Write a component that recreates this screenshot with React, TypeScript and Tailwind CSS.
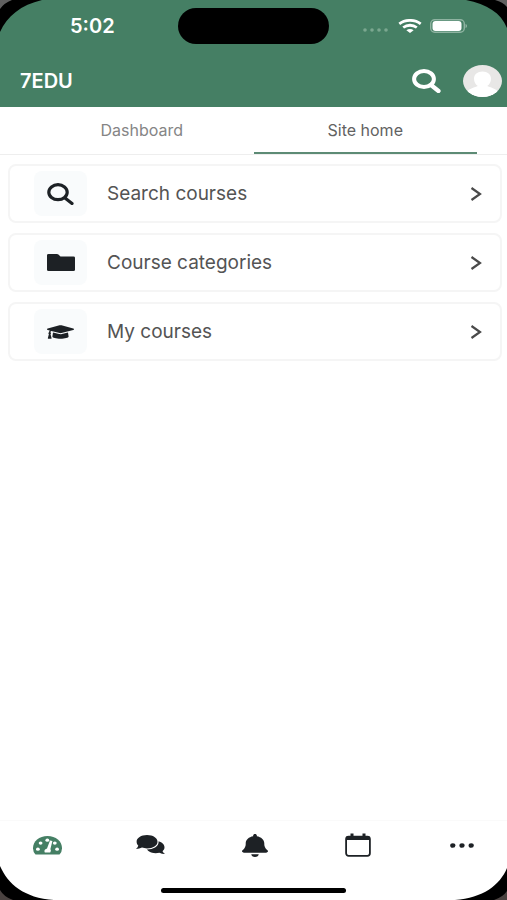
import type { ReactNode } from 'react';
import { FaBell } from 'react-icons/fa6';
import { FaGraduationCap } from 'react-icons/fa';

function StatusBar() {
  return (
    <div className="grid h-[54px] grid-cols-3 items-start pt-2">
      <time className="pt-1 pl-[70px] text-[20px] leading-7 font-semibold">5:02</time>
      <div className="h-9 w-[151px] justify-self-center rounded-full bg-black" />
      <div className="flex h-9 items-center justify-end gap-2 pr-[39px]">
        <svg className="mt-2 h-1 w-7 text-[#7ba790]" viewBox="0 0 28 4" fill="currentColor" aria-hidden="true">
          <circle cx="3" cy="2" r="1.800" />
          <circle cx="10" cy="2" r="1.800" />
          <circle cx="17" cy="2" r="1.800" />
          <circle cx="24" cy="2" r="1.800" />
        </svg>
        <svg className="h-[14px] w-6" viewBox="0 0 24 14" fill="none" stroke="currentColor" strokeWidth="2.8" aria-hidden="true">
          <path d="M1.3 4.9C7.4.2 16.6.2 22.7 4.9" />
          <path d="M5.2 8.500c4-3 9.600-3 13.600 0" />
          <path d="M8.4 11.200c2.100-1.600 5.100-1.600 7.200 0L12 14z" fill="currentColor" stroke="none" />
        </svg>
        <svg className="h-[14px] w-[38px]" viewBox="0 0 38 14" aria-hidden="true">
          <rect x="0.7" y="0.7" width="33.6" height="12.6" rx="4" fill="none" stroke="#8eb3a1" strokeWidth="1.4" />
          <rect x="2.5" y="2" width="29" height="10" rx="3" fill="#fff" />
          <path d="M35.5 5c2 .6 2 3.4 0 4z" fill="#8eb3a1" />
        </svg>
      </div>
    </div>
  );
}

function Header() {
  return (
    <header className="h-[107px] bg-[#457f64] text-white">
      <StatusBar />
      <div className="flex h-[53px] items-center pr-[5px] pl-5">
        <h1 className="flex-1 text-[20px] leading-6 font-semibold">7EDU</h1>
        <button type="button" aria-label="Search" className="mr-[22px]">
          <svg className="h-6 w-[29px]" viewBox="0 0 29 24" fill="none" stroke="currentColor" aria-hidden="true">
            <ellipse cx="12" cy="10" rx="9.900" ry="8" strokeWidth="4" />
            <path d="M19 16l7.500 6" strokeWidth="4.200" strokeLinecap="round" />
          </svg>
        </button>
        <button type="button" aria-label="Account">
          <svg className="h-8 w-[39px]" viewBox="0 0 39 32" aria-hidden="true">
            <clipPath id="avatar">
              <ellipse cx="19.5" cy="16" rx="19.5" ry="16" />
            </clipPath>
            <g clipPath="url(#avatar)">
              <rect width="39" height="32" fill="#e8e7e6" />
              <path d="M19.5 6.500c-5 0-8.500 3-8.500 7.200 0 3.300 1.500 5.800 3.800 7.200C12 22 6 23.500 3.500 27v5h32v-5c-2.500-3.500-8.500-5-11.300-6.100 2.300-1.400 3.800-3.900 3.800-7.200 0-4.200-3.500-7.200-8.500-7.200z" fill="#fff" />
            </g>
          </svg>
        </button>
      </div>
    </header>
  );
}

function Tabs() {
  return (
    <div role="tablist" className="flex h-12 border-b border-[#eeeeee] px-[30px] text-[16px] leading-5">
      <button type="button" role="tab" aria-selected="false" className="flex-1 border-b-2 border-transparent text-[#858585]">
        Dashboard
      </button>
      <button type="button" role="tab" aria-selected="true" className="flex-1 border-b-2 border-[#5d8b75] text-[#626262]">
        Site home
      </button>
    </div>
  );
}

function CourseLink({ icon, label }: { icon: ReactNode; label: string }) {
  return (
    <a href="#" className="flex h-[59px] items-center rounded-lg border-2 border-[#f5f5f5] pr-[18px] pl-6 text-[19px] leading-6 text-[#545454]">
      <span className="mr-5 flex h-[45px] w-[53px] items-center justify-center rounded-lg bg-[#f9fbfc] text-[#1d2125]">
        {icon}
      </span>
      <span className="flex-1">{label}</span>
      <svg className="h-[14px] w-3" viewBox="0 0 12 14" fill="none" stroke="#4a4a4a" strokeWidth="2.2" aria-hidden="true">
        <path d="M1.500 1 10 7l-8.500 6" />
      </svg>
    </a>
  );
}

function CourseSearchIcon() {
  return (
    <svg className="h-[22px] w-[27px]" viewBox="0 0 27 22" fill="none" stroke="currentColor" aria-hidden="true">
      <ellipse cx="11" cy="9.200" rx="9.200" ry="7.500" strokeWidth="3.200" />
      <path d="M18 15l7 5.500" strokeWidth="3.200" strokeLinecap="round" />
    </svg>
  );
}

function FolderIcon() {
  return (
    <svg className="h-[17px] w-7" viewBox="0 0 28 17" fill="currentColor" aria-hidden="true">
      <path d="M1.500 0H10q.8 0 1.400.5L13.500 2.400H26.500q1.500 0 1.500 1.300v12q0 1.300-1.500 1.300h-25Q0 17 0 15.700V1.300Q0 0 1.500 0z" />
    </svg>
  );
}

function GaugeIcon() {
  return (
    <svg className="h-[19px] w-[29px]" viewBox="0 0 29 19" aria-hidden="true">
      <path d="M2.500 18.500Q0 16 0 12.200C0 5.200 6.200 0 14.500 0S29 5.200 29 12.200q0 3.800-2.500 6.300z" fill="currentColor" />
      <g fill="#fff">
        <ellipse cx="4.900" cy="13.200" rx="1.900" ry="1.600" />
        <ellipse cx="7.600" cy="7.100" rx="1.900" ry="1.600" />
        <ellipse cx="14.300" cy="4.200" rx="1.900" ry="1.600" />
        <ellipse cx="21.800" cy="7.100" rx="1.900" ry="1.600" />
        <ellipse cx="24.100" cy="13.200" rx="1.900" ry="1.600" />
        <path d="M17 4.500l2.400.6-2 7.900q1.200 1.700-.2 3.500h-5.400q-1.400-2.800 2.200-4z" />
      </g>
    </svg>
  );
}

function ChatIcon() {
  const front =
    'M11 0C17 0 21.500 2.900 21.500 6.700s-4.500 6.700-10.500 6.700c-1.800 0-3.500-.3-5-.8-1.700.9-3.700 1.300-6 1.300 1.100-.9 1.900-2 2.300-3.200C1.200 9.600.6 8.200.6 6.700.6 2.900 5.200 0 11 0z';
  return (
    <svg className="h-5 w-[29px]" viewBox="0 0 29 20" fill="currentColor" aria-hidden="true">
      <path d="M19.500 6c5 0 9 2.700 9 6.300 0 1.600-.7 2.900-2 3.900.5 1.100 1.400 2.100 2.500 2.800-2.100 0-4-.4-5.600-1.200-6.200 1.500-12.900-.9-12.900-5.500 0-3.600 4-6.300 9-6.300z" />
      <path d={front} stroke="#fff" strokeWidth="2.200" />
      <path d={front} />
    </svg>
  );
}

function NavButton({ label, active = false, children }: { label: string; active?: boolean; children: ReactNode }) {
  return (
    <button
      type="button"
      aria-label={label}
      className={`flex h-12 w-[60px] items-center justify-center ${active ? 'text-[#457f64]' : 'text-[#1d2125]'}`}
    >
      {children}
    </button>
  );
}

function BottomNav() {
  return (
    <nav className="border-t border-[#fafafa]">
      <div className="flex justify-between pr-[15px] pl-[17px]">
        <NavButton label="Home" active>
          <GaugeIcon />
        </NavButton>
        <NavButton label="Messages">
          <ChatIcon />
        </NavButton>
        <NavButton label="Notifications">
          <FaBell className="h-[23px] w-[26px]" preserveAspectRatio="none" />
        </NavButton>
        <NavButton label="Calendar">
          <svg className="h-6 w-[26px]" viewBox="0 0 26 24" aria-hidden="true">
            <rect x="1.100" y="3.600" width="23.800" height="19.200" rx="2.500" fill="none" stroke="currentColor" strokeWidth="1.800" />
            <path d="M1 7V5.500Q1 3 4 3h1.500V.5h3V3h9V.5h3V3H22q3 0 3 2.500V7z" fill="currentColor" />
          </svg>
        </NavButton>
        <NavButton label="More">
          <svg className="h-[5px] w-6" viewBox="0 0 24 5" fill="currentColor" aria-hidden="true">
            <ellipse cx="2.800" cy="2.500" rx="2.600" ry="2.300" />
            <ellipse cx="12" cy="2.500" rx="2.600" ry="2.300" />
            <ellipse cx="21.200" cy="2.500" rx="2.600" ry="2.300" />
          </svg>
        </NavButton>
      </div>
      <div className="flex h-[31px] justify-center pt-[19px]">
        <div className="h-[5px] w-[185px] rounded-full bg-black" />
      </div>
    </nav>
  );
}

function DeviceCorners() {
  return (
    <>
      <svg className="absolute top-0 left-0 h-8 w-11" viewBox="0 0 44 32" aria-hidden="true">
        <path d="M0 0h42C21 5 7 16 0 32z" />
        <path d="M0 0h12Q4 3 0 9z" fill="#606060" />
      </svg>
      <svg className="absolute top-0 right-0 h-8 w-11" viewBox="0 0 44 32" aria-hidden="true">
        <path d="M44 0H3c21 4 35 13 41 28z" />
        <path d="M44 0H32q8 2 12 7z" fill="#606060" />
      </svg>
      <svg className="absolute bottom-0 left-0 h-9 w-14" viewBox="0 0 56 36" aria-hidden="true">
        <path d="M0 36h54C24 34 8 20 0 2z" />
        <path d="M0 36h13Q4 33 0 26z" fill="#4a4240" />
      </svg>
      <svg className="absolute right-0 bottom-0 h-9 w-14" viewBox="0 0 56 36" aria-hidden="true">
        <path d="M56 36H4C32 34 49 21 56 4z" />
        <path d="M56 36H43q9-3 13-9z" fill="#4a4240" />
      </svg>
    </>
  );
}

export default function App() {
  return (
    <div className="relative flex min-h-screen flex-col overflow-hidden bg-white font-['Inter','Liberation_Sans',sans-serif]">
      <Header />
      <Tabs />
      <main className="flex flex-1 flex-col gap-[10px] pt-[9px] pr-[5px] pl-2">
        <CourseLink label="Search courses" icon={<CourseSearchIcon />} />
        <CourseLink label="Course categories" icon={<FolderIcon />} />
        <CourseLink label="My courses" icon={<FaGraduationCap className="h-[18px] w-[27px]" preserveAspectRatio="none" />} />
      </main>
      <BottomNav />
      <DeviceCorners />
    </div>
  );
}
